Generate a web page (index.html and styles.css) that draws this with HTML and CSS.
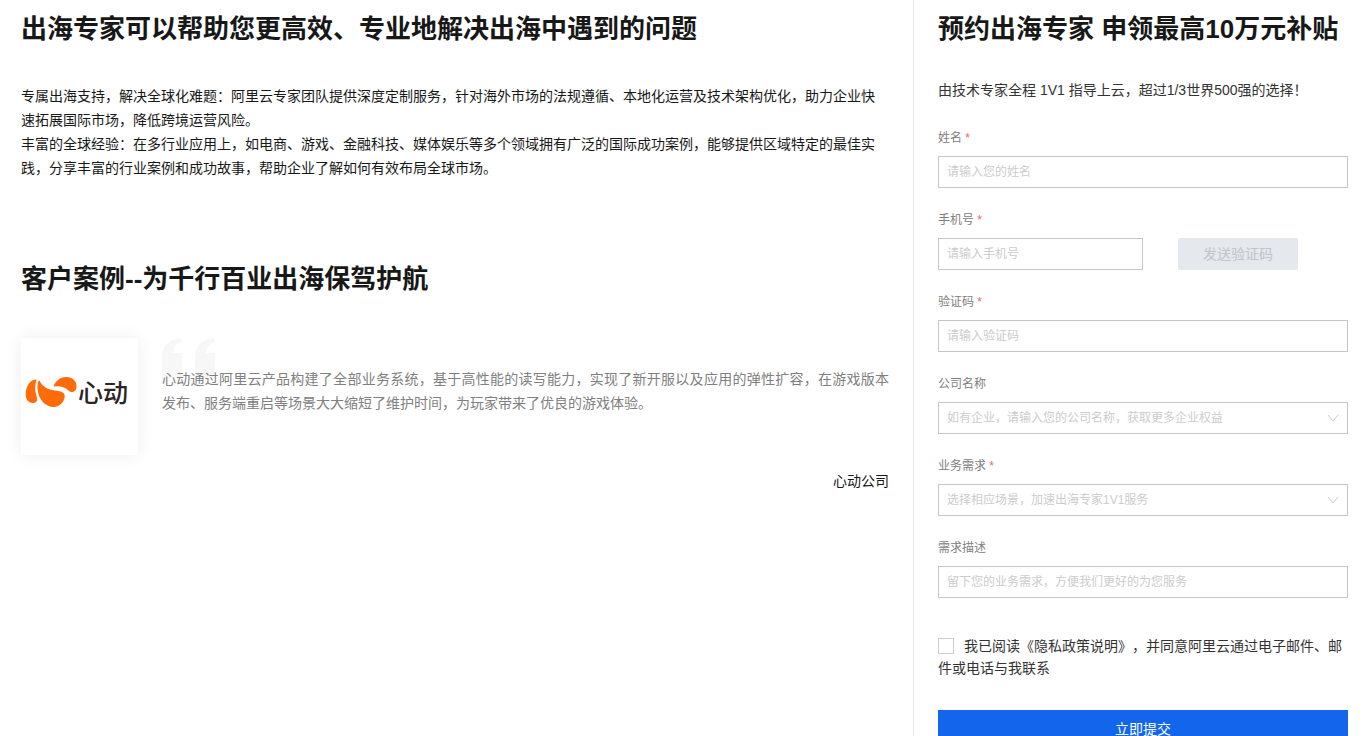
FILE: index.html
```html
<!DOCTYPE html>
<html lang="zh-CN">
<head>
<meta charset="utf-8">
<meta name="viewport" content="width=device-width, initial-scale=1">
<title>预约出海专家</title>
<link rel="stylesheet" href="styles.css">
</head>
<body>
<div class="page">
  <main class="intro">
    <section class="section">
      <h2 class="title">出海专家可以帮助您更高效、专业地解决出海中遇到的问题</h2>
      <div class="summary">
        <p>专属出海支持，解决全球化难题：阿里云专家团队提供深度定制服务，针对海外市场的法规遵循、本地化运营及技术架构优化，助力企业快速拓展国际市场，降低跨境运营风险。</p>
        <p>丰富的全球经验：在多行业应用上，如电商、游戏、金融科技、媒体娱乐等多个领域拥有广泛的国际成功案例，能够提供区域特定的最佳实践，分享丰富的行业案例和成功故事，帮助企业了解如何有效布局全球市场。</p>
      </div>
    </section>
    <section class="section">
      <h2 class="title">客户案例--为千行百业出海保驾护航</h2>
      <div class="case">
        <div class="case-logo">
          <svg viewBox="0 0 117 117" role="img" aria-label="心动">
            <g fill="#ff6a0a">
              <path d="M14.500 41.500C8 42 4.500 50 4.700 57C4.800 62 8 65 12 65C16 65 17 62 15.500 58C13.500 52 13.800 47 15.500 41.800Z"/>
              <path d="M18 42C22 49.500 27 51.500 34 52.500C41 53 44 55 43.700 59C43 64.500 38 69 33 69C24 69 17.500 61 16.700 52C16.300 48 16.500 45 18 42Z"/>
              <path d="M32.500 48.500C35 42 40 39 45.500 39C51.500 39 55.500 43 55.500 48C55.500 51.500 54 54 51 54C48 54 47 51.500 44 50C41 48.500 37 48 32.500 48.500Z"/>
            </g>
            <text class="logo-text" x="57" y="64">心动</text>
          </svg>
        </div>
        <figure class="case-body">
          <svg class="quote-mark" viewBox="0 0 54 40" aria-hidden="true">
            <path d="M19 0L20 4C14 6 11 10 11 15H20V40H0V19C0 8 7 1 19 0Z"/>
            <path d="M52 0L53 4C47 6 44 10 44 15H53V40H33V19C33 8 40 1 52 0Z"/>
          </svg>
          <blockquote class="quote">心动通过阿里云产品构建了全部业务系统，基于高性能的读写能力，实现了新开服以及应用的弹性扩容，在游戏版本发布、服务端重启等场景大大缩短了维护时间，为玩家带来了优良的游戏体验。</blockquote>
          <figcaption class="source">心动公司</figcaption>
        </figure>
      </div>
    </section>
  </main>

  <aside class="booking">
    <h2 class="title">预约出海专家 申领最高10万元补贴</h2>
    <p class="lead">由技术专家全程 1V1 指导上云，超过1/3世界500强的选择！</p>
    <form class="form">
      <div class="field">
        <label for="name">姓名 <span class="required">*</span></label>
        <input class="control" id="name" type="text" placeholder="请输入您的姓名">
      </div>
      <div class="field">
        <label for="phone">手机号 <span class="required">*</span></label>
        <div class="phone-row">
          <input class="control" id="phone" type="tel" placeholder="请输入手机号">
          <button class="send" type="button" disabled>发送验证码</button>
        </div>
      </div>
      <div class="field">
        <label for="code">验证码 <span class="required">*</span></label>
        <input class="control" id="code" type="text" placeholder="请输入验证码">
      </div>
      <div class="field">
        <label for="company">公司名称</label>
        <div class="dropdown">
          <input class="control" id="company" type="text" role="combobox" aria-expanded="false" placeholder="如有企业，请输入您的公司名称，获取更多企业权益">
          <svg class="chevron" viewBox="0 0 12 8" aria-hidden="true"><path d="M1 1L6 7L11 1"/></svg>
        </div>
      </div>
      <div class="field">
        <label for="need">业务需求 <span class="required">*</span></label>
        <div class="dropdown">
          <select class="control" id="need" required>
            <option value="">选择相应场景，加速出海专家1V1服务</option>
          </select>
          <svg class="chevron" viewBox="0 0 12 8" aria-hidden="true"><path d="M1 1L6 7L11 1"/></svg>
        </div>
      </div>
      <div class="field">
        <label for="detail">需求描述</label>
        <input class="control" id="detail" type="text" placeholder="留下您的业务需求，方便我们更好的为您服务">
      </div>
      <label class="consent"><input class="check" type="checkbox">我已阅读《隐私政策说明》，并同意阿里云通过电子邮件、邮件或电话与我联系</label>
      <button class="submit" type="submit">立即提交</button>
    </form>
  </aside>
</div>
</body>
</html>
```

FILE: styles.css
```css
* {
  box-sizing: border-box;
}

body {
  margin: 0;
  background: #fff;
  color: #181818;
  font: 14px/24px "Liberation Sans", "Noto Sans CJK SC", sans-serif;
  text-spacing-trim: space-all;
}

input,
select,
button {
  font: inherit;
}

.page {
  display: grid;
  grid-template-columns: minmax(0, 1fr) 454px;
  min-height: 100vh;
}

.intro {
  display: flex;
  flex-direction: column;
  gap: 78px;
  padding: 8px 24px 0 21px;
}

.title {
  margin: 0;
  padding-top: 2px;
  font-size: 26px;
  line-height: 38px;
  font-weight: 700;
}

.summary {
  padding: 36px 8px 0 0;
}

.summary p {
  margin: 0;
}

.case {
  display: flex;
  align-items: flex-start;
  gap: 24px;
  padding-top: 40px;
}

.case-logo {
  flex: none;
  width: 117px;
  height: 117px;
  background: #fff;
  box-shadow: 0 0 16px rgba(0, 0, 0, 0.07);
}

.case-logo svg {
  display: block;
}

.logo-text {
  font: 500 25px "Noto Sans CJK SC", sans-serif;
  fill: #2b2324;
}

.case-body {
  position: relative;
  flex: 1;
  margin: 0;
  padding-top: 29px;
}

.quote-mark {
  position: absolute;
  top: 0;
  left: 0;
  width: 54px;
  height: 40px;
  fill: #f7f7f7;
}

.quote {
  position: relative;
  margin: 0;
  color: #808080;
  text-align: justify;
}

.source {
  margin-top: 54px;
  text-align: right;
}

.booking {
  padding: 8px 19px 0 24px;
  border-left: 1px solid #ebebeb;
}

.lead {
  margin: 30px 0 26px;
  color: #333;
}

.form {
  display: flex;
  flex-direction: column;
  gap: 22px;
}

.field {
  display: flex;
  flex-direction: column;
  gap: 8px;
  font-size: 12px;
  line-height: 20px;
}

.field label {
  color: #808080;
}

.required {
  color: #e5686b;
}

.control {
  width: 100%;
  height: 32px;
  padding: 0 8px;
  border: 1px solid #c4c6cc;
  border-radius: 0;
  background: #fff;
  color: #333;
  appearance: none;
}

.control::placeholder,
select.control:invalid {
  color: #ccc;
  opacity: 1;
}

.phone-row {
  display: flex;
  gap: 35px;
}

.phone-row .control {
  width: 50%;
}

.send {
  width: 120px;
  height: 32px;
  padding: 0;
  border: 0;
  border-radius: 2px;
  background: #e5e8ed;
  color: #c1c4cb;
  font-size: 14px;
}

.dropdown {
  position: relative;
}

.chevron {
  position: absolute;
  top: 12px;
  right: 9px;
  width: 12px;
  height: 8px;
  fill: none;
  stroke: #ccc;
  pointer-events: none;
}

.consent {
  margin-top: 15px;
  color: #333;
  line-height: 22px;
}

.check {
  width: 16px;
  height: 16px;
  margin: 0 10px 0 0;
  border: 1px solid #d0d0d0;
  background: #fff;
  vertical-align: -3px;
  appearance: none;
}

.check:checked {
  background: #1366ec;
}

.submit {
  height: 38px;
  margin-top: 9px;
  border: 0;
  background: #1366ec;
  color: #fff;
}

@media (max-width: 900px) {
  .page {
    grid-template-columns: 1fr;
    gap: 40px;
  }
}
```
